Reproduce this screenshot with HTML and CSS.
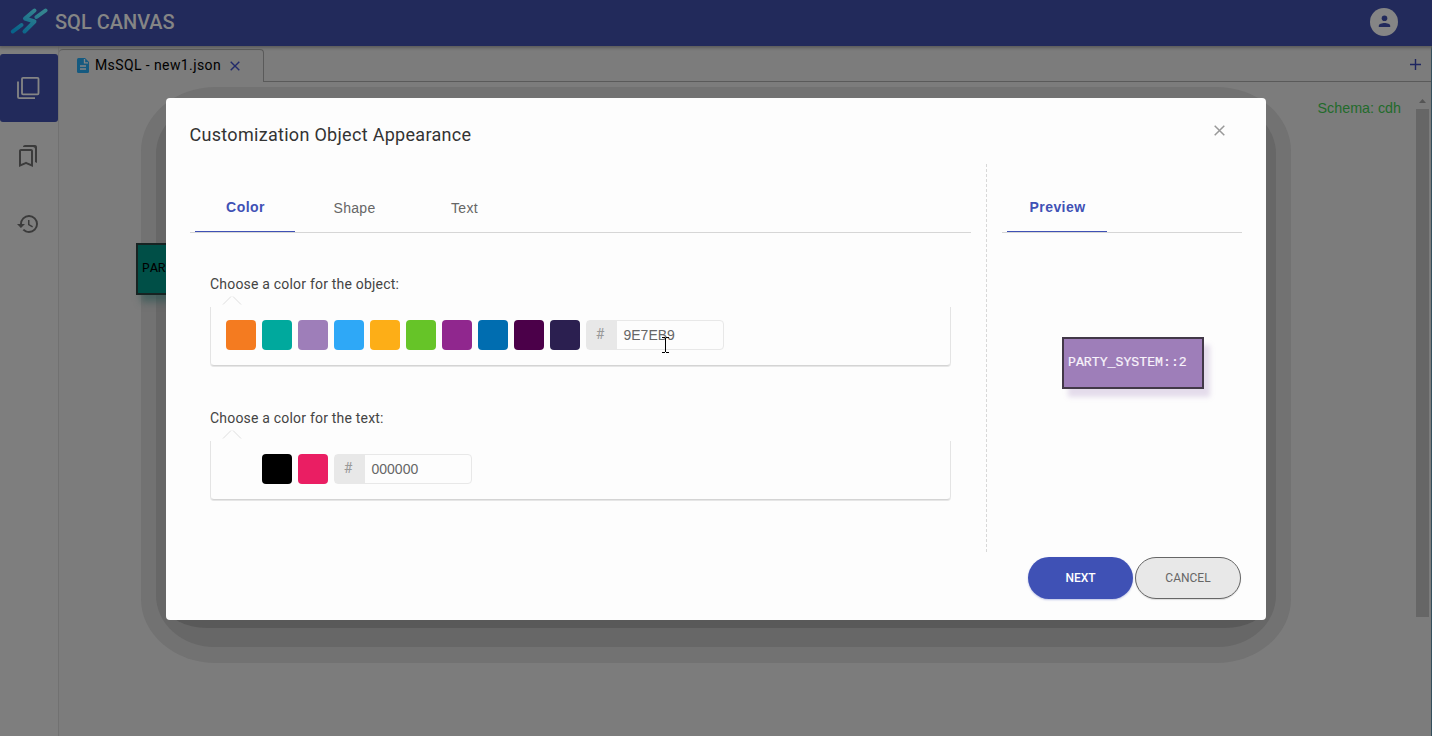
FILE: index.html
```html
<!DOCTYPE html>
<html lang="en">
<head>
<meta charset="utf-8">
<title>SQL Canvas</title>
<link rel="stylesheet" href="styles.css">
</head>
<body>
<div class="app">
  <header class="topbar">
    <svg class="logo" width="38" height="28" viewBox="0 0 38 28" fill="none" stroke-width="4" stroke-linecap="round" stroke-linejoin="round">
      <defs><linearGradient id="brand" gradientUnits="userSpaceOnUse" x1="10" y1="27" x2="26" y2="2"><stop offset="0" stop-color="#08638a"/><stop offset="1" stop-color="#34848f"/></linearGradient></defs>
      <g stroke="url(#brand)"><path d="M24.500 3.500L15 11.500l9.500 3L14.500 24.500"/><path d="M2.800 24.500l8.700-6.500"/><path d="M35.500 3.500l-9 6.500"/></g>
    </svg>
    <span class="brand">SQL CANVAS</span>
    <span class="avatar"><svg width="16" height="16" viewBox="0 0 16 16" fill="#222a5c"><circle cx="8.500" cy="4.300" r="2.800"/><path d="M2.800 13v-1.200c0-2 3.200-2.900 5.700-2.900s5.700.9 5.700 2.900V13z"/></svg></span>
  </header>
  <div class="body">
    <nav class="rail">
      <span class="rail-item rail-active"><svg width="24" height="24" viewBox="0 0 24 24" fill="none" stroke="#858585" stroke-width="1.800"><rect x="6" y="1.800" width="16.500" height="16.500" rx="1"/><path d="M2 5.500V21q0 1.200 1.200 1.200H19"/></svg></span>
      <span class="rail-item"><svg width="24" height="24" viewBox="0 0 24 24" fill="#3b3b3b"><path d="M19 18l2 1V3c0-1.100-.9-2-2-2H8.990C7.890 1 7 1.900 7 3h10c1.100 0 2 .9 2 2v13zM15 7v12.970l-4.210-1.810-.79-.34-.79.34L5 19.970V7h10m0-2H5c-1.100 0-2 .9-2 2v16l7-3 7 3V7c0-1.100-.9-2-2-2z"/></svg></span>
      <span class="rail-item"><svg width="24" height="24" viewBox="0 0 24 24" fill="#3b3b3b"><path d="M13 3a9 9 0 0 0-9 9H1l3.890 3.890.07.14L9 12H6c0-3.870 3.130-7 7-7s7 3.130 7 7-3.130 7-7 7c-1.930 0-3.680-.79-4.940-2.060l-1.420 1.420A8.954 8.954 0 0 0 13 21a9 9 0 0 0 0-18zm-1 5v5l4.280 2.540.72-1.210-3.500-2.080V8H12z"/></svg></span>
    </nav>
    <main class="workspace">
      <div class="filetabs">
        <div class="filetab">
          <svg width="12" height="15" viewBox="0 0 12 15"><path d="M1.500 0H8l4 4v9.500q0 1.500-1.500 1.500h-9Q0 15 0 13.500v-12Q0 0 1.500 0z" fill="#155a80"/><path d="M7.500 1v3.800H11M3 8h6M3 11h6" stroke="#858585" stroke-width="1.300" fill="none"/></svg>
          <span class="filename">MsSQL - new1.json</span>
          <svg class="tabclose" width="10" height="10" viewBox="0 0 10 10" stroke="#222a6b" stroke-width="1.400"><path d="M.7.7l8.600 8.600M9.300.7L.7 9.300"/></svg>
        </div>
        <div class="addcell"><svg width="11" height="11" viewBox="0 0 11 11" stroke="#1e2560" stroke-width="1.400"><path d="M5.500 0v11M0 5.500h11"/></svg></div>
      </div>
      <div class="canvas">
        <span class="schema">Schema: cdh</span>
        <div class="scrollbar"><i class="arrow"></i><i class="thumb"></i></div>
      </div>
    </main>
  </div>
  <i class="halo halo-outer"></i><i class="halo halo-mid"></i><i class="halo halo-inner"></i>
  <div class="node node-back">PARTY</div>
  <section class="dialog">
    <div class="dialog-head">
      <h1>Customization Object Appearance</h1>
      <svg width="11" height="11" viewBox="0 0 11 11" stroke="#999" stroke-width="1.500"><path d="M.7.700l9.600 9.600M10.300.7L.7 10.300"/></svg>
    </div>
    <div class="dialog-body">
      <div class="settings">
        <div class="tabs"><span class="tab tab-on">Color</span><span class="tab tab-shape">Shape</span><span class="tab">Text</span></div>
        <div class="group">
          <p class="label">Choose a color for the object:</p>
          <div class="card">
            <svg class="notch" width="20" height="9" viewBox="0 0 20 9" fill="none" stroke="#dedede"><path d="M1 8.500L9 .5M11 .5l8 8"/></svg>
            <i class="sw orange"></i><i class="sw teal"></i><i class="sw lilac"></i><i class="sw sky"></i><i class="sw amber"></i><i class="sw green"></i><i class="sw purple"></i><i class="sw blue"></i><i class="sw plum"></i><i class="sw navy"></i>
            <div class="hex"><span class="hash">#</span><span class="value">9E7EB9</span></div>
          </div>
        </div>
        <div class="group">
          <p class="label">Choose a color for the text:</p>
          <div class="card">
            <svg class="notch" width="20" height="9" viewBox="0 0 20 9" fill="none" stroke="#dedede"><path d="M1 8.500L9 .5M11 .5l8 8"/></svg>
            <i class="sw white"></i><i class="sw black"></i><i class="sw pink"></i>
            <div class="hex"><span class="hash">#</span><span class="value">000000</span></div>
          </div>
        </div>
      </div>
      <svg class="divider" width="1" height="388"><path d="M.5 0v388" stroke="#d8d8d8" stroke-dasharray="3 2"/></svg>
      <div class="preview">
        <div class="tabs"><span class="tab tab-on">Preview</span></div>
        <div class="stage"><div class="node node-preview">PARTY_SYSTEM::2</div></div>
        <div class="actions"><span class="btn btn-next">NEXT</span><span class="btn btn-cancel">CANCEL</span></div>
      </div>
    </div>
  </section>
  <svg class="cursor" width="7" height="16" viewBox="0 0 7 16" fill="none" stroke="#000" shape-rendering="crispEdges"><path d="M0 .5h3M4 .5h3M3.500 1v14M0 15.500h3M4 15.500h3"/></svg>
</div>
</body>
</html>
```

FILE: styles.css
```css
* { box-sizing: border-box; }
body { margin: 0; font-family: Roboto, sans-serif; }
.app { position: relative; width: 1432px; height: 736px; overflow: hidden; background: #7c7c7c; display: flex; flex-direction: column; }
.topbar { height: 46px; flex: none; background: #222a5b; display: flex; align-items: center; padding: 0 34px 0 10px; box-shadow: 0 1px 3px 1px #5c5c5c; position: relative; }
.logo { margin: -5px 7px 0 0; }
.brand { font-size: 20px; font-weight: 500; color: #858585; line-height: 24px; margin-top: -3px; white-space: nowrap; }
.avatar { margin-left: auto; margin-top: -2px; width: 28px; height: 28px; border-radius: 50%; background: #858585; display: flex; align-items: center; justify-content: center; }
.body { flex: 1; display: flex; min-height: 0; border-right: 1px solid #344f5c; }
.rail { width: 59px; padding-top: 8px; border-right: 1px solid #717171; background: #7e7e7e; display: flex; flex-direction: column; }
.rail-item { width: 58px; height: 68px; display: flex; align-items: center; justify-content: center; padding-right: 2px; }
.rail-active { background: #222a5b; border-radius: 3px; }
.workspace { flex: 1; display: flex; flex-direction: column; }
.filetabs { height: 36px; padding-top: 3px; display: flex; }
.filetab { width: 205px; border: solid #5a5a5a; border-width: 1px 1px 0 0; border-radius: 4px 4px 0 0; display: flex; align-items: center; padding: 0 0 2px 18px; }
.filename { font-size: 14px; letter-spacing: .4px; color: #000; margin: 0 9px 0 6px; white-space: nowrap; }
.tabclose { margin-top: 1px; }
.addcell { flex: 1; border-bottom: 1px solid #5a5a5a; display: flex; justify-content: flex-end; align-items: center; padding: 0 10px 1px 0; }
.canvas { flex: 1; display: flex; justify-content: flex-end; }
.schema { font: 14.300px/18px "Liberation Sans", sans-serif; color: #226b2b; margin: 17px 15px 0 0; }
.scrollbar { width: 15px; padding-top: 17px; }
.arrow { display: block; width: 7px; height: 4px; margin-left: 3px; background: #555; clip-path: polygon(50% 0, 100% 100%, 0 100%); }
.thumb { display: block; width: 13px; height: 508px; margin-top: 6px; background: #666; }
.halo { position: absolute; }
.halo-outer { left: 141px; top: 87px; width: 1150px; height: 576px; background: #727272; border-radius: 75px / 64px; }
.halo-mid { left: 156px; top: 102px; width: 1120px; height: 545px; background: #676767; border-radius: 58px / 52px; }
.halo-inner { left: 167px; top: 150px; width: 1098px; height: 478px; background: #595959; border-radius: 40px / 22px; }
.node { font: 13.200px/48px "Courier New", "Liberation Mono", monospace; width: 142px; height: 52px; border: 2px solid #423848; padding-left: 4px; white-space: nowrap; }
.node-back { position: absolute; left: 136px; top: 243px; background: #004f47; border-color: #172322; color: #000; box-shadow: 5px 7px 7px rgba(30,80,75,.5); }
.node-preview { background: #9e7eb9; color: #f8f3fb; box-shadow: 6px 8px 5px rgba(158,126,185,.26); margin: 104px 0 0 60px; -webkit-text-stroke: .2px #f8f3fb; }
.dialog { position: absolute; left: 166px; top: 98px; width: 1100px; height: 522px; background: #fdfdfd; border-radius: 4px; display: flex; flex-direction: column; }
.dialog-head { height: 66px; display: flex; justify-content: space-between; padding: 25px 41px 0 23.500px; }
.dialog-head svg { margin-top: 2px; }
h1 { margin: 0; font-size: 18px; line-height: 24px; font-weight: 400; color: #333; letter-spacing: .3px; white-space: nowrap; }
.dialog-body { flex: 1; display: flex; padding-left: 24px; }
.settings { width: 781px; }
.tabs { height: 69px; border-bottom: 1px solid #d6d6d6; display: flex; padding: 19px 0 0 5px; }
.tab { width: 110px; height: 49px; line-height: 51px; text-align: center; font-family: "Liberation Sans", sans-serif; font-size: 14px; color: #666; letter-spacing: .3px; text-indent: 1px; }
.tab-on { width: 100px; border-bottom: 1px solid #3f51b5; font-weight: 700; color: #3f51b5; letter-spacing: .45px; line-height: 49px; }
.tab-shape { margin-left: 4px; }
.group { padding: 40px 20px 0 20px; }
.group + .group { padding-top: 41px; }
.label { margin: 0; font-size: 14px; line-height: 22px; color: #444; letter-spacing: .2px; white-space: nowrap; }
.card { position: relative; width: 741px; height: 59px; margin-top: 12px; border: 1px solid #e4e4e4; border-top: 0; border-bottom: 1px solid #d4d4d4; box-shadow: 0 1px 0 #e6e6e6; border-radius: 0 0 4px 4px; display: flex; gap: 6px; padding: 13px 0 0 15px; }
.notch { position: absolute; left: 11px; top: -11px; }
.sw { width: 30px; height: 30px; border-radius: 4px; }
.orange { background: #f47b20; } .teal { background: #00a99d; } .lilac { background: #9e7eb9; } .sky { background: #2ea8f7; }
.amber { background: #fdae17; } .green { background: #66c428; } .purple { background: #90278e; } .blue { background: #006db0; }
.plum { background: #4b0049; } .navy { background: #2b1f50; } .white { background: #fdfdfd; } .black { background: #000; } .pink { background: #ea1e63; }
.hex { width: 138px; height: 30px; border: 1px solid #e8e8e8; border-radius: 4px; display: flex; }
.hash { width: 30px; background: #e8e8e8; color: #999; font-size: 14px; line-height: 26px; text-align: center; padding-right: 4px; }
.value { font: 14px/29px "Liberation Sans", sans-serif; color: #666; padding-left: 6.500px; }
.divider { margin: 0 15px; }
.preview { width: 240px; display: flex; flex-direction: column; }
.stage { height: 324px; }
.actions { display: flex; gap: 2px; padding-left: 26px; width: 250px; }
.btn { width: 105px; height: 42px; border-radius: 21px; flex: none; text-align: center; line-height: 42px; font-size: 12px; }
.btn-next { background: #3f51b5; color: #fff; font-weight: 500; box-shadow: 0 1px 2px #bcc2e6; }
.btn-cancel { width: 106px; background: #e8e8e8; border: 1px solid #666; color: #666; line-height: 40px; box-shadow: 0 1px 1px #ddd; }
.cursor { position: absolute; left: 662px; top: 337px; }
```
